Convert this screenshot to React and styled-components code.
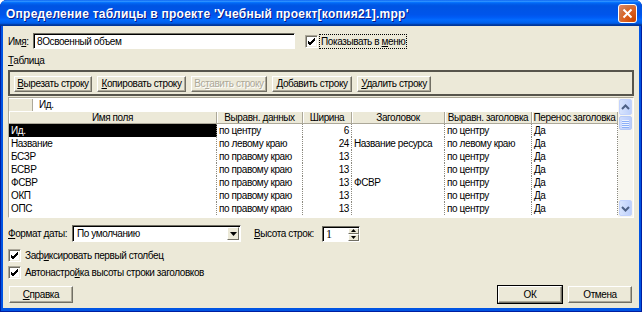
import styled, { createGlobalStyle } from "styled-components"

const GlobalStyle = createGlobalStyle`
  html, body {
    margin: 0;
    padding: 0;
  }
  body {
    width: 642px;
    height: 312px;
    overflow: hidden;
    font-family: "Liberation Sans", Arial, sans-serif;
    font-size: 10px;
    letter-spacing: -0.4px;
    color: #000;
  }
  * { box-sizing: border-box; }
`

const columns = [
    { title: "Имя поля", width: 208 },
    { title: "Выравн. данных", width: 86 },
    { title: "Ширина", width: 49 },
    { title: "Заголовок", width: 93 },
    { title: "Выравн. заголовка", width: 87 },
    { title: "Перенос заголовка", width: 86 },
]

const rows = [
    ["Ид.", "по центру", "6", "", "по центру", "Да"],
    ["Название", "по левому краю", "24", "Название ресурса", "по левому краю", "Да"],
    ["БСЗР", "по правому краю", "13", "", "по центру", "Да"],
    ["БСВР", "по правому краю", "13", "", "по центру", "Да"],
    ["ФСВР", "по правому краю", "13", "ФСВР", "по центру", "Да"],
    ["ОКП", "по правому краю", "13", "", "по центру", "Да"],
    ["ОПС", "по правому краю", "13", "", "по центру", "Да"],
]

const gridTemplate = columns.map(c => `${c.width}px`).join(" ")

function CheckBox() {
    return (
        <CheckSquare>
            <svg width="9" height="9" viewBox="0 0 9 9">
                <path d="M1 4 L3 6 L8 1 M1 5 L3 7 L8 2 M1 6 L3 8 L8 3" stroke="#000" strokeWidth="1" fill="none" />
            </svg>
        </CheckSquare>
    )
}

function Arrow({ dir, color = "#4D6185" }) {
    const d = dir === "up" ? "M1 6 L4.5 2.5 L8 6" : "M1 3 L4.5 6.5 L8 3"
    return (
        <svg width="9" height="9" viewBox="0 0 9 9">
            <path d={d} stroke={color} strokeWidth="2" fill="none" />
        </svg>
    )
}

export default function App() {
    return (
        <>
            <GlobalStyle />
            <Window>
                <TitleBar>
                    <Title>Определение таблицы в проекте 'Учебный проект[копия21].mpp'</Title>
                    <CloseButton>
                        <svg width="11" height="11" viewBox="0 0 11 11">
                            <path d="M1.5 1.5 L9.5 9.5 M9.5 1.5 L1.5 9.5" stroke="#fff" strokeWidth="2" />
                        </svg>
                    </CloseButton>
                </TitleBar>

                <Body>
                    <NameRow>
                        <Label $width={25}>Им<u>я</u>:</Label>
                        <TextField $width={262}>8Освоенный объем</TextField>
                        <CheckLine>
                            <CheckBox />
                            <FocusText>Показывать в <u>м</u>еню</FocusText>
                        </CheckLine>
                    </NameRow>

                    <SectionLabel><u>Т</u>аблица</SectionLabel>

                    <Toolbar>
                        <Button $width={78}><u>В</u>ырезать строку</Button>
                        <Button $width={89}><u>К</u>опировать строку</Button>
                        <Button $width={76} disabled>Вс<u>т</u>авить строку</Button>
                        <Button $width={80}><u>Д</u>обавить строку</Button>
                        <Button $width={74}><u>У</u>далить строку</Button>
                    </Toolbar>

                    <Grid>
                        <GridMain>
                            <EditRow>
                                <RowHandle />
                                <EditField>Ид.</EditField>
                            </EditRow>
                            <HeaderRow>
                                {columns.map(c => (
                                    <HeaderCell key={c.title}>{c.title}</HeaderCell>
                                ))}
                            </HeaderRow>
                            {rows.map((r, i) => (
                                <DataRow key={i}>
                                    {r.map((v, j) => (
                                        <Cell
                                            key={j}
                                            $selected={i === 0 && j === 0}
                                            $right={j === 2}
                                        >
                                            {v}
                                        </Cell>
                                    ))}
                                </DataRow>
                            ))}
                        </GridMain>
                        <ScrollBar>
                            <ScrollButton><Arrow dir="up" /></ScrollButton>
                            <Thumb>
                                <Grip />
                                <Grip />
                                <Grip />
                                <Grip />
                            </Thumb>
                            <Track />
                            <ScrollButton><Arrow dir="down" /></ScrollButton>
                        </ScrollBar>
                    </Grid>

                    <DateRow>
                        <Label $width={64}><u>Ф</u>ормат даты:</Label>
                        <Select>
                            <SelectText>По умолчанию</SelectText>
                            <DropButton>
                                <svg width="7" height="4" viewBox="0 0 7 4"><path d="M0 0 H7 L3.5 4 Z" fill="#000" /></svg>
                            </DropButton>
                        </Select>
                        <Label $width={68} $ml={13}><u>В</u>ысота строк:</Label>
                        <Spin>
                            <SpinText>1</SpinText>
                            <SpinButtons>
                                <SpinButton>
                                    <svg width="5" height="3" viewBox="0 0 5 3"><path d="M0 3 H5 L2.5 0 Z" fill="#000" /></svg>
                                </SpinButton>
                                <SpinButton>
                                    <svg width="5" height="3" viewBox="0 0 5 3"><path d="M0 0 H5 L2.5 3 Z" fill="#000" /></svg>
                                </SpinButton>
                            </SpinButtons>
                        </Spin>
                    </DateRow>

                    <OptionRow $mt={7}>
                        <CheckBox />
                        <span>Заф<u>и</u>ксировать первый столбец</span>
                    </OptionRow>
                    <OptionRow $mt={4}>
                        <CheckBox />
                        <span>Автонастро<u>й</u>ка высоты строки заголовков</span>
                    </OptionRow>

                    <ButtonRow>
                        <DialogButton><u>С</u>правка</DialogButton>
                        <ButtonGroup>
                            <DialogButton $default>ОК</DialogButton>
                            <DialogButton>Отмена</DialogButton>
                        </ButtonGroup>
                    </ButtonRow>
                </Body>
            </Window>
        </>
    )
}

const Window = styled.div`
    width: 642px;
    height: 312px;
    display: flex;
    flex-direction: column;
    background: #0054E3;
    border-radius: 7px 7px 0 0;
    overflow: hidden;
    padding: 0 3px 4px 3px;
    box-shadow: inset 1px 0 0 #001EA0, inset -1px 0 0 #001EA0, inset 0 -1px 0 #001EA0;
`

const TitleBar = styled.div`
    height: 26px;
    margin: 0 -3px;
    padding: 0 5px 0 6px;
    display: flex;
    align-items: center;
    justify-content: space-between;
    background: linear-gradient(to bottom, #0058EE 0%, #3593FF 4%, #288EFF 6%, #127DFF 8%, #036FFC 10%, #0262EE 14%, #0057E5 20%, #0054E3 24%, #0055EB 56%, #005BF5 66%, #026AFE 76%, #0062EF 86%, #0052D6 92%, #0040AB 94%, #003092 100%);
`

const Title = styled.div`
    color: #fff;
    font-family: "Liberation Sans", Arial, sans-serif;
    font-weight: bold;
    font-size: 12px;
    letter-spacing: 0.25px;
    text-shadow: 1px 1px 0 #0A1883;
    white-space: nowrap;
    padding-top: 1px;
`

const CloseButton = styled.div`
    width: 19px;
    height: 19px;
    border: 1px solid #fff;
    border-radius: 3px;
    display: flex;
    align-items: center;
    justify-content: center;
    background: radial-gradient(circle at 90% 90%, #CC4600 0%, #DC6527 55%, #CD7546 70%, #E2805B 90%);
    margin-top: 1px;
`

const Body = styled.div`
    flex: 1;
    background: #ECE9D8;
    padding: 7px 5px 0 5px;
    display: flex;
    flex-direction: column;
`

const NameRow = styled.div`
    display: flex;
    align-items: center;
    height: 16px;
`

const Label = styled.span`
    white-space: nowrap;
    flex-shrink: 0;
    width: ${p => (p.$width ? `${p.$width}px` : "auto")};
    margin-left: ${p => p.$ml || 0}px;
`

const TextField = styled.div`
    width: ${p => p.$width}px;
    height: 16px;
    background: #fff;
    border-top: 1px solid #716F64;
    border-left: 1px solid #716F64;
    border-right: 1px solid #fff;
    border-bottom: 1px solid #fff;
    box-shadow: inset 1px 1px 0 #000;
    padding: 1px 3px;
    line-height: 13px;
    white-space: nowrap;
`

const CheckLine = styled.div`
    display: flex;
    align-items: center;
    margin-left: 10px;
`

const CheckSquare = styled.div`
    width: 13px;
    height: 13px;
    background: #fff;
    border-top: 1px solid #ACA899;
    border-left: 1px solid #ACA899;
    border-right: 1px solid #fff;
    border-bottom: 1px solid #fff;
    box-shadow: inset 1px 1px 0 #716F64, inset -1px -1px 0 #F1EFE2;
    display: flex;
    align-items: center;
    justify-content: center;
    flex-shrink: 0;
`

const FocusText = styled.span`
    margin-left: 2px;
    padding: 0 1px;
    outline: 1px dotted #000;
    line-height: 13px;
    white-space: nowrap;
`

const SectionLabel = styled.div`
    margin-top: 5px;
    height: 13px;
    line-height: 13px;
`

const Toolbar = styled.div`
    margin-top: 3px;
    height: 26px;
    border: 2px solid #57554C;
    padding: 4px 4px 0 4px;
    display: flex;
    gap: 5px;
`

const Button = styled.div`
    width: ${p => p.$width}px;
    height: 16px;
    line-height: 14px;
    text-align: center;
    white-space: nowrap;
    background: #ECE9D8;
    border-top: 1px solid #fff;
    border-left: 1px solid #fff;
    border-right: 1px solid #716F64;
    border-bottom: 1px solid #716F64;
    box-shadow: inset -1px -1px 0 #ACA899;
    color: ${p => (p.disabled ? "#ACA899" : "#000")};
    text-shadow: ${p => (p.disabled ? "1px 1px 0 #fff" : "none")};
`

const Grid = styled.div`
    margin-top: 1px;
    height: 121px;
    display: flex;
    border-top: 1px solid #ACA899;
    border-left: 1px solid #ACA899;
    border-right: 1px solid #fff;
    border-bottom: 1px solid #fff;
    background: #fff;
`

const GridMain = styled.div`
    width: 609px;
    display: flex;
    flex-direction: column;
`

const EditRow = styled.div`
    display: flex;
    height: 12px;
    margin-top: 1px;
`

const RowHandle = styled.div`
    width: 24px;
    background: #ECE9D8;
    border-right: 1px solid #ACA899;
`

const EditField = styled.div`
    flex: 1;
    padding-left: 6px;
    line-height: 12px;
`

const HeaderRow = styled.div`
    display: grid;
    grid-template-columns: ${gridTemplate};
    height: 13px;
    background: #ECE9D8;
    border-top: 1px solid #fff;
`

const HeaderCell = styled.div`
    text-align: center;
    line-height: 12px;
    white-space: nowrap;
    overflow: hidden;
    border-right: 1px solid #ACA899;
    border-bottom: 1px solid #ACA899;
    box-shadow: inset 1px 0 0 #fff;
`

const DataRow = styled.div`
    display: grid;
    grid-template-columns: ${gridTemplate};
    height: 13px;
`

const Cell = styled.div`
    line-height: 13px;
    white-space: nowrap;
    overflow: hidden;
    padding: 0 2px;
    text-align: ${p => (p.$right ? "right" : "left")};
    border-right: 1px dotted #8C8A80;
    background: ${p => (p.$selected ? "#000" : "transparent")};
    color: ${p => (p.$selected ? "#fff" : "#000")};
`

const ScrollBar = styled.div`
    width: 17px;
    display: flex;
    flex-direction: column;
    background: #F7F6F0;
    padding: 0 1px;
`

const ScrollButton = styled.div`
    height: 16px;
    margin: 1px 0;
    border: 1px solid #C3D3FD;
    border-radius: 2px;
    background: linear-gradient(to right, #D8E4FD, #BDD0FB);
    display: flex;
    align-items: center;
    justify-content: center;
`

const Thumb = styled.div`
    height: 14px;
    border: 1px solid #B6CAF5;
    border-radius: 2px;
    background: linear-gradient(to right, #CFDCFD, #B9CCFB);
    display: flex;
    flex-direction: column;
    align-items: center;
    justify-content: center;
    gap: 1px;
`

const Grip = styled.div`
    width: 7px;
    height: 1px;
    background: #EEF4FE;
    box-shadow: 0 1px 0 #8CB0F8;
`

const Track = styled.div`
    flex: 1;
`

const DateRow = styled.div`
    margin-top: 7px;
    height: 17px;
    display: flex;
    align-items: center;
`

const Select = styled.div`
    width: 169px;
    height: 17px;
    display: flex;
    background: #fff;
    border-top: 1px solid #716F64;
    border-left: 1px solid #716F64;
    border-right: 1px solid #fff;
    border-bottom: 1px solid #fff;
    box-shadow: inset 1px 1px 0 #000;
    padding: 1px;
`

const SelectText = styled.div`
    flex: 1;
    padding-left: 3px;
    line-height: 13px;
`

const DropButton = styled.div`
    width: 12px;
    height: 13px;
    background: #ECE9D8;
    border-top: 1px solid #fff;
    border-left: 1px solid #fff;
    border-right: 1px solid #716F64;
    border-bottom: 1px solid #716F64;
    display: flex;
    align-items: center;
    justify-content: center;
`

const Spin = styled.div`
    width: 38px;
    height: 16px;
    display: flex;
    background: #fff;
    border-top: 1px solid #716F64;
    border-left: 1px solid #716F64;
    border-right: 1px solid #fff;
    border-bottom: 1px solid #fff;
    box-shadow: inset 1px 1px 0 #000;
    padding: 1px 0 0 1px;
`

const SpinText = styled.div`
    flex: 1;
    padding-left: 2px;
    line-height: 13px;
    font-family: "Liberation Serif", serif;
    font-size: 12px;
`

const SpinButtons = styled.div`
    width: 11px;
    display: flex;
    flex-direction: column;
`

const SpinButton = styled.div`
    flex: 1;
    background: #ECE9D8;
    border-top: 1px solid #fff;
    border-left: 1px solid #fff;
    border-right: 1px solid #716F64;
    border-bottom: 1px solid #716F64;
    display: flex;
    align-items: center;
    justify-content: center;
`

const OptionRow = styled.div`
    margin-top: ${p => p.$mt}px;
    height: 13px;
    display: flex;
    align-items: center;
    gap: 4px;
    line-height: 13px;
`

const ButtonRow = styled.div`
    margin-top: auto;
    margin-bottom: 5px;
    padding: 0 2px 0 1px;
    display: flex;
    justify-content: space-between;
`

const ButtonGroup = styled.div`
    display: flex;
    gap: 6px;
`

const DialogButton = styled.div`
    width: 64px;
    height: 17px;
    line-height: 15px;
    text-align: center;
    background: #ECE9D8;
    border-top: 1px solid #fff;
    border-left: 1px solid #fff;
    border-right: 1px solid #716F64;
    border-bottom: 1px solid #716F64;
    box-shadow: ${p => (p.$default ? "0 0 0 1px #000, inset -1px -1px 0 #ACA899" : "inset -1px -1px 0 #ACA899")};
`
